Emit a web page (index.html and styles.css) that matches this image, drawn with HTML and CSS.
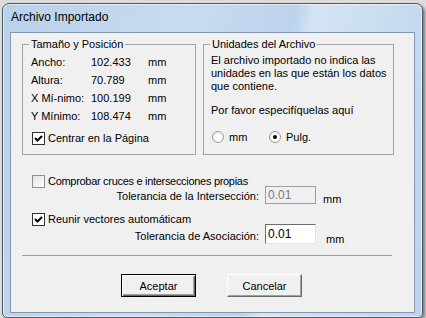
FILE: index.html
```html
<!DOCTYPE html>
<html lang="es">
<head>
  <meta charset="UTF-8" />
  <title>Archivo Importado</title>
  <link rel="stylesheet" href="styles.css">
</head>
<body>
  <div class="window">
    <div class="titlebar">Archivo Importado</div>
    <div class="client">
      <div class="groups">
        <div class="group group-size">
          <span class="group-title">Tamaño y Posición</span>
          <div class="dims">
            <span>Ancho:</span><span>102.433</span><span>mm</span>
            <span>Altura:</span><span>70.789</span><span>mm</span>
            <span>X Mí-nimo:</span><span>100.199</span><span>mm</span>
            <span>Y Mínimo:</span><span>108.474</span><span>mm</span>
          </div>
          <div class="check check-center">
            <span class="box checked"><svg viewBox="0 0 11 11" width="11" height="11"><polyline points="2,5 4.5,7.5 9,3" fill="none" stroke="#000" stroke-width="2"/></svg></span>
            Centrar en la Página
          </div>
        </div>
        <div class="group group-units">
          <span class="group-title">Unidades del Archivo</span>
          <p class="units-note">El archivo importado no indica las<br>unidades en las que están los datos<br>que contiene.</p>
          <p class="units-ask">Por favor especifíquelas aquí</p>
          <div class="radios">
            <div class="radio-opt radio-mm"><span class="radio"></span>mm</div>
            <div class="radio-opt"><span class="radio selected"></span>Pulg.</div>
          </div>
        </div>
      </div>

      <div class="options">
        <div class="check opt-check">
          <span class="box"></span>
          <span class="opt-text opt-text-cross">Comprobar cruces e intersecciones propias</span>
        </div>
        <div class="tol-row">
          <span class="tol-label">Tolerancia de la Intersección:</span>
          <span class="field disabled">0.01</span>
          <span class="unit">mm</span>
        </div>
        <div class="check opt-check opt-join">
          <span class="box checked"><svg viewBox="0 0 11 11" width="11" height="11"><polyline points="2,5 4.5,7.5 9,3" fill="none" stroke="#000" stroke-width="2"/></svg></span>
          <span class="opt-text">Reunir vectores automáticam</span>
        </div>
        <div class="tol-row tol-join">
          <span class="tol-label">Tolerancia de Asociación:</span>
          <span class="field">0.01</span>
          <span class="unit">mm</span>
        </div>
      </div>

      <div class="separator"></div>

      <div class="buttons">
        <button class="btn btn-default">Aceptar</button>
        <button class="btn">Cancelar</button>
      </div>
    </div>
  </div>
</body>
</html>
```

FILE: styles.css
```css
body {
  margin: 0;
  background: #dcdcdc;
  font-family: "Liberation Sans", Arial, sans-serif;
  font-size: 11px;
  color: #000;
}
.window {
  box-sizing: border-box;
  width: 421px;
  height: 315px;
  margin: 3px 0 0 2px;
  padding: 0 7px 4px 7px;
  display: flex;
  flex-direction: column;
  border: 1px solid #4d5864;
  border-radius: 7px 7px 5px 5px;
  background: linear-gradient(100deg, #b9d1ea 0%, #c8dcf1 40%, #bcd3ec 62%, #d4e4f4 66%, #bcd4ed 100%);
  box-shadow: inset 0 0 0 1px rgba(255,255,255,0.55), 2px 2px 3px rgba(0,0,0,0.45);
}
.titlebar {
  height: 28px;
  line-height: 26px;
  padding-left: 1px;
  font-size: 12px;
  color: #000;
}
.client {
  flex: 1;
  border: 1px solid #8397b0;
  background: #f0f0f0;
  padding: 11px 0 0 11px;
}
.groups {
  display: flex;
  gap: 7px;
}
.group {
  position: relative;
  box-sizing: border-box;
  height: 111px;
  border: 1px solid #a3a3a3;
}
.group-title {
  position: absolute;
  top: -7px;
  left: 6px;
  padding: 0 2px;
  line-height: 13px;
  background: #f0f0f0;
}
.group-size {
  width: 174px;
  padding: 8px 0 0 8px;
}
.group-units {
  width: 191px;
  padding: 9px 0 0 7px;
}
.dims {
  display: grid;
  grid-template-columns: 60px 57px auto;
  line-height: 18px;
}
.check {
  display: flex;
  align-items: center;
}
.check-center {
  margin: 4px 0 0 1px;
  height: 18px;
}
.box {
  box-sizing: border-box;
  flex: none;
  width: 13px;
  height: 13px;
  margin-right: 3px;
  border: 1px solid #8e8f8f;
  background: linear-gradient(135deg, #e4e4e4, #ffffff);
  display: flex;
}
.box.checked {
  border-color: #333;
  background: #fff;
}
.opt-text {
  white-space: nowrap;
  line-height: 13px;
}
.opt-text-cross {
  letter-spacing: -0.3px;
}
.units-note {
  margin: 0;
  line-height: 13px;
}
.units-ask {
  margin: 11px 0 0;
  line-height: 13px;
}
.radios {
  display: flex;
  margin: 13px 0 0 1px;
  height: 13px;
  align-items: center;
}
.radio-opt {
  display: flex;
  align-items: center;
}
.radio-mm {
  width: 57px;
}
.radio {
  box-sizing: border-box;
  width: 12px;
  height: 12px;
  margin-right: 5px;
  border-radius: 50%;
  border: 1px solid #9a9a9a;
  background: radial-gradient(circle at 60% 60%, #ffffff 35%, #e2e2e2 100%);
  display: flex;
  align-items: center;
  justify-content: center;
}
.radio.selected::after {
  content: "";
  width: 4px;
  height: 4px;
  border-radius: 50%;
  background: #000;
}
.options {
  padding-top: 20px;
}
.opt-check {
  height: 13px;
  margin-left: 10px;
}
.opt-join {
  margin-top: 9px;
}
.tol-row {
  display: flex;
  align-items: flex-start;
  height: 18px;
  margin-top: -2px;
}
.tol-label {
  width: 237px;
  text-align: right;
  line-height: 13px;
  margin-top: 4px;
}
.field {
  box-sizing: border-box;
  width: 51px;
  height: 18px;
  margin-left: 6px;
  padding: 1px 0 0 2px;
  font-size: 12px;
  line-height: 15px;
  border: 1px solid;
  border-color: #6e6e6e #e3e3e3 #e3e3e3 #6e6e6e;
  background: #fff;
}
.field.disabled {
  border-color: #a0a0a0;
  background: #f0f0f0;
  color: #7a7a7a;
}
.unit {
  margin: 7px 0 0 7px;
  line-height: 13px;
}
.tol-join {
  height: 20px;
}
.tol-join .tol-label {
  margin-top: 6px;
}
.tol-join .field {
  height: 20px;
  padding-top: 2px;
}
.tol-join .unit {
  margin: 9px 0 0 10px;
}
.separator {
  width: 370px;
  margin-top: 11px;
  border-top: 1px solid #a0a0a0;
}
.buttons {
  display: flex;
  gap: 31px;
  margin-top: 18px;
  padding-left: 99px;
}
.btn {
  box-sizing: border-box;
  width: 75px;
  height: 23px;
  padding: 0;
  font-family: "Liberation Sans", Arial, sans-serif;
  font-size: 11px;
  color: #000;
  background: #f0f0f0;
  border: 1px solid;
  border-color: #ffffff #696969 #696969 #ffffff;
  box-shadow: inset -1px -1px #a0a0a0;
}
.btn-default {
  border-color: #000;
  box-shadow: inset 1px 1px #fff, inset -1px -1px #696969, inset -2px -2px #a0a0a0;
}
```
